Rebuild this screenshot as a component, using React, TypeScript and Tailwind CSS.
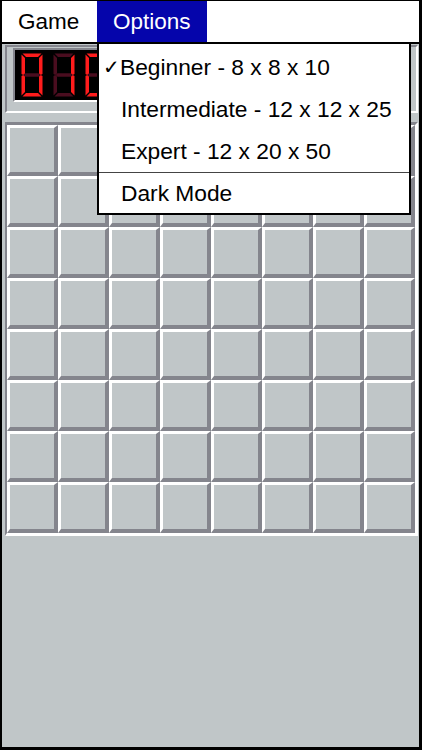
import React from "react";

const ON = "#ff1c1c";
const OFF = "#4a0d1f";

const SEGS: Record<string, string> = {
  a: "1.5,0.5 20.5,0.5 17,4 5,4",
  b: "21.5,1.5 21.5,21 19.75,22 18,20.5 18,5",
  c: "21.5,23 21.5,42.5 18,39 18,23.5 19.75,22",
  d: "1.5,43.5 20.5,43.5 17,40 5,40",
  e: "0.5,23 2.25,22 4,23.5 4,39 0.5,42.5",
  f: "0.5,1.5 4,5 4,20.5 2.25,22 0.5,21",
  g: "2.5,22 4.5,20.25 17.5,20.25 19.5,22 17.5,23.75 4.5,23.75",
};

const DIGITS: Record<string, string> = {
  "0": "abcdef",
  "1": "bc",
  "2": "abdeg",
  "3": "abcdg",
  "4": "bcfg",
  "5": "acdfg",
  "6": "acdefg",
  "7": "abc",
  "8": "abcdefg",
  "9": "abcdfg",
};

function Digit({ d }: { d: string }) {
  const lit = DIGITS[d] || "";
  return (
    <svg width="22" height="44" viewBox="0 0 22 44" className="block">
      {Object.keys(SEGS).map((k) => (
        <polygon
          key={k}
          points={SEGS[k]}
          fill={lit.includes(k) ? ON : OFF}
        />
      ))}
    </svg>
  );
}

function Cell() {
  return (
    <div className="w-[51px] h-[51px] bg-[#c0c6c8] border-t-[3px] border-l-[3px] border-t-white border-l-white border-b-[4px] border-r-[4px] border-b-[#84858d] border-r-[#84858d]" />
  );
}

export default function App() {
  const font = { fontFamily: '"Liberation Sans", "DejaVu Sans", Arial, sans-serif' };
  const cells = Array.from({ length: 64 });
  return (
    <div
      className="relative w-[422px] h-[750px] overflow-hidden bg-[#c0c6c8] border-l-2 border-r-[3px] border-t border-b-[3px] border-black flex flex-col"
      style={font}
    >
      {/* Menu bar */}
      <div className="h-[43px] shrink-0 bg-white border-b-2 border-black flex text-[22.5px] text-black">
        <div className="w-[95px] pl-[16px] flex items-center">Game</div>
        <div className="w-[110px] pl-[16px] flex items-center bg-[#0505ab] text-white">
          Options
        </div>
      </div>

      {/* Counter panel */}
      <div className="mt-[1px] ml-[3px] w-[413px] h-[68px] shrink-0 border-2 border-t-[#84858d] border-l-[#84858d] border-b-white border-r-white pl-[6px] pt-[1px]">
        <div className="w-[112px] h-[54px] border-2 border-t-[#84858d] border-l-[#84858d] border-b-white border-r-white bg-black flex items-center gap-[10px] pl-[6px]">
          <Digit d="0" />
          <Digit d="1" />
          <Digit d="0" />
        </div>
      </div>

      {/* Board */}
      <div className="mt-[9px] ml-[3px] w-[413px] shrink-0 border-t-[3px] border-l-2 border-t-[#84858d] border-l-[#84858d] border-b-[3px] border-r-[3px] border-b-white border-r-white">
        <div className="grid grid-cols-[repeat(8,51px)]">
          {cells.map((_, i) => (
            <Cell key={i} />
          ))}
        </div>
      </div>

      {/* Dropdown menu */}
      <div className="absolute left-[95px] top-[43px] w-[314px] bg-white border-l-2 border-r-2 border-b-2 border-black pt-[2px] text-[22.75px] text-black">
        <div className="h-[42px] flex items-center pl-[4px]">
          <span className="w-[17px] shrink-0 text-[20px]">✓</span>
          <span>Beginner - 8 x 8 x 10</span>
        </div>
        <div className="h-[42px] flex items-center pl-[22px]">
          Intermediate - 12 x 12 x 25
        </div>
        <div className="h-[42px] flex items-center pl-[22px]">
          Expert - 12 x 20 x 50
        </div>
        <div className="h-px bg-[#444]" />
        <div className="h-[40px] flex items-center pl-[22px]">Dark Mode</div>
      </div>
    </div>
  );
}
